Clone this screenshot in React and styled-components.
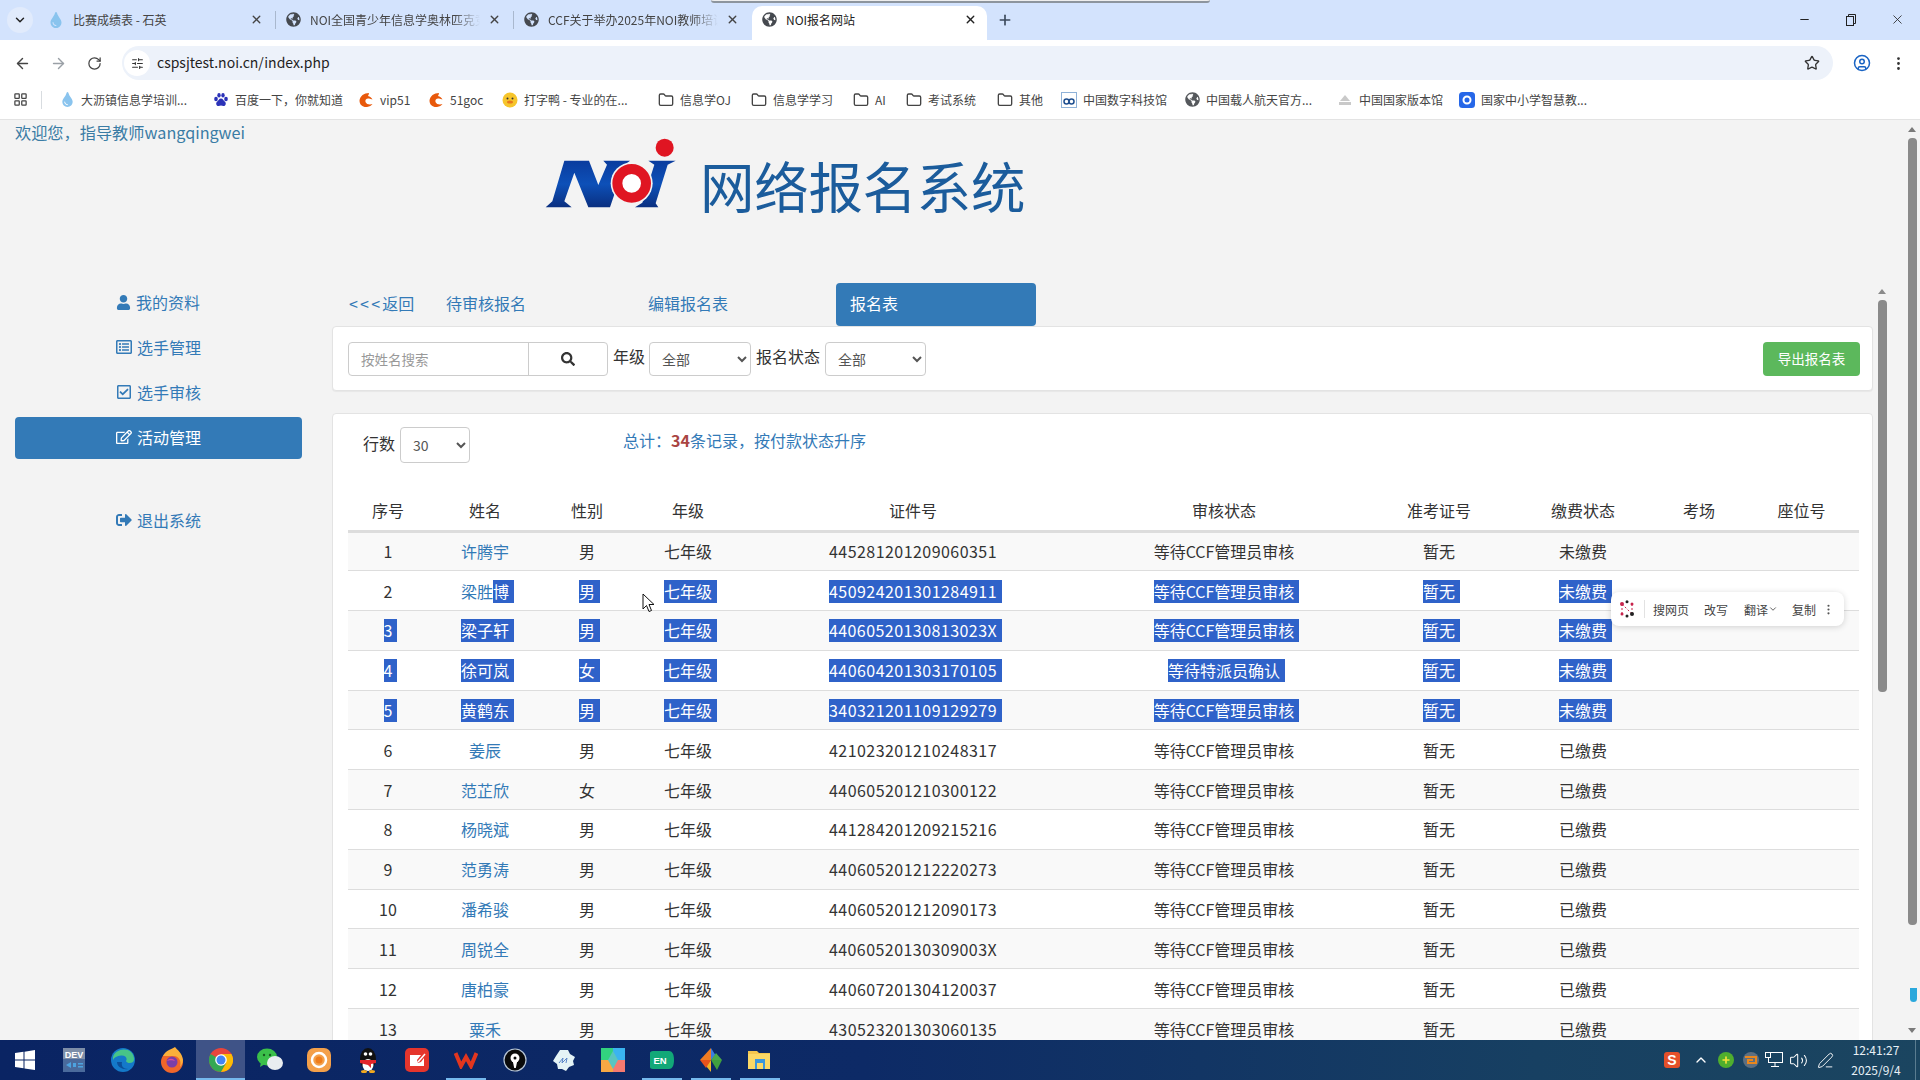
import React from 'react'
import styled, { createGlobalStyle } from 'styled-components'
import { ArrowLeft, ArrowRight, RotateCw, Star, CircleUser, EllipsisVertical, LayoutGrid, Folder, X, Plus, Minus, ChevronDown, SlidersHorizontal, ChevronUp, Volume2, PenLine } from 'lucide-react'
import { FaGlobeAmericas, FaUser, FaRegListAlt, FaRegCheckSquare, FaRegEdit, FaSignOutAlt, FaSearch, FaTint } from 'react-icons/fa'

const Global = createGlobalStyle`
  html, body { margin: 0; padding: 0; overflow: hidden; }
  body { font-family: "Noto Sans CJK SC", "Noto Sans", sans-serif; color: #333; }
  * { box-sizing: border-box; }
`

const students = [
  [1, '许腾宇', '男', '445281201209060351', '等待CCF管理员审核', '未缴费'],
  [2, '梁胜博', '男', '450924201301284911', '等待CCF管理员审核', '未缴费'],
  [3, '梁子轩', '男', '44060520130813023X', '等待CCF管理员审核', '未缴费'],
  [4, '徐可岚', '女', '440604201303170105', '等待特派员确认', '未缴费'],
  [5, '黄鹤东', '男', '340321201109129279', '等待CCF管理员审核', '未缴费'],
  [6, '姜辰', '男', '421023201210248317', '等待CCF管理员审核', '已缴费'],
  [7, '范芷欣', '女', '440605201210300122', '等待CCF管理员审核', '已缴费'],
  [8, '杨晓斌', '男', '441284201209215216', '等待CCF管理员审核', '已缴费'],
  [9, '范勇涛', '男', '440605201212220273', '等待CCF管理员审核', '已缴费'],
  [10, '潘希骏', '男', '440605201212090173', '等待CCF管理员审核', '已缴费'],
  [11, '周锐全', '男', '44060520130309003X', '等待CCF管理员审核', '已缴费'],
  [12, '唐柏豪', '男', '440607201304120037', '等待CCF管理员审核', '已缴费'],
  [13, '粟禾', '男', '430523201303060135', '等待CCF管理员审核', '已缴费'],
]

const columns = [
  ['序号', 80], ['姓名', 114], ['性别', 90], ['年级', 112], ['证件号', 338],
  ['审核状态', 284], ['准考证号', 146], ['缴费状态', 142], ['考场', 90], ['座位号', 115],
]

const bookmarks = [
  { w: 154, label: '大沥镇信息学培训...', icon: <FaTint size={15} color="#8ac4ee" /> },
  { w: 145, label: '百度一下，你就知道', icon: <BaiduIcon /> },
  { w: 70, label: 'vip51', icon: <SwirlIcon /> },
  { w: 74, label: '51goc', icon: <SwirlIcon /> },
  { w: 156, label: '打字鸭 - 专业的在...', icon: <DuckIcon /> },
  { w: 93, label: '信息学OJ', folder: true },
  { w: 102, label: '信息学学习', folder: true },
  { w: 53, label: 'AI', folder: true },
  { w: 91, label: '考试系统', folder: true },
  { w: 64, label: '其他', folder: true },
  { w: 123, label: '中国数字科技馆', icon: <DigitalIcon /> },
  { w: 153, label: '中国载人航天官方...', icon: <FaGlobeAmericas size={15} color="#55585c" /> },
  { w: 122, label: '中国国家版本馆', icon: <HallIcon /> },
  { w: 130, label: '国家中小学智慧教...', icon: <EduIcon /> },
]

function BaiduIcon() {
  return (
    <svg width="16" height="16" viewBox="0 0 16 16" fill="#2b32b8">
      <ellipse cx="3" cy="7" rx="1.8" ry="2.2" /><ellipse cx="6" cy="3.2" rx="1.7" ry="2.2" />
      <ellipse cx="10" cy="3.2" rx="1.7" ry="2.2" /><ellipse cx="13" cy="7" rx="1.8" ry="2.2" />
      <path d="M8 6.5c-2 0-2.4 2-4 3.2-1.5 1.2-.8 4.6 1.6 4.3 1-.1 1.6-.4 2.4-.4s1.4.3 2.4.4c2.4.3 3.1-3.1 1.6-4.3C10.400 8.500 10 6.500 8 6.500z" />
    </svg>
  )
}

function SwirlIcon() {
  return (
    <svg width="16" height="16" viewBox="0 0 16 16">
      <path d="M11 1 C6 1 2 4 1.500 8.500 C1.500 13 5 15.500 9 15 C11.500 14.700 13.500 13.500 14.500 12 C12 13 8.500 12.500 7.500 10 C6.800 8 8.500 6 11 6.500 L14.500 7.500 C13.500 5.500 12 4.500 10 4 C10.500 3 11 2 11 1z" fill="#e8590c" />
    </svg>
  )
}

function DuckIcon() {
  return (
    <svg width="16" height="16" viewBox="0 0 16 16">
      <circle cx="8" cy="8" r="7.500" fill="#f6c52c" />
      <circle cx="5.500" cy="6.500" r="1" fill="#333" /><circle cx="10.500" cy="6.500" r="1" fill="#333" />
      <ellipse cx="8" cy="10" rx="3" ry="1.600" fill="#e8781c" />
    </svg>
  )
}

function DigitalIcon() {
  return (
    <svg width="16" height="16" viewBox="0 0 16 16">
      <rect x=".5" y=".5" width="15" height="15" fill="#fff" stroke="#8fb2d8" />
      <circle cx="5.500" cy="9.500" r="2.500" fill="none" stroke="#1f4f8f" strokeWidth="1.500" />
      <circle cx="10.500" cy="9.500" r="2.500" fill="none" stroke="#1f4f8f" strokeWidth="1.500" />
    </svg>
  )
}

function HallIcon() {
  return (
    <svg width="16" height="16" viewBox="0 0 16 16" fill="#c9c9c9">
      <path d="M8 3 L13 9 H3z" /><rect x="2" y="10" width="12" height="3" />
    </svg>
  )
}

function EduIcon() {
  return (
    <svg width="16" height="16" viewBox="0 0 16 16">
      <rect width="16" height="16" rx="3.500" fill="#2667e8" />
      <circle cx="8" cy="8" r="3.500" fill="none" stroke="#fff" strokeWidth="2" />
    </svg>
  )
}

function RestoreIcon() {
  return (
    <svg width="12" height="14" viewBox="0 0 12 14" fill="none" stroke="#222" strokeWidth="1">
      <rect x="1.500" y="3.500" width="7" height="9" /><path d="M3.500 3.500V1.500H10.500V10.500H8.500" />
    </svg>
  )
}

function WindowsIcon() {
  return (
    <svg width="22" height="22" viewBox="0 0 22 22" fill="#fff">
      <path d="M1 4l8.500-1.200v7.700H1zM10.500 2.700L21 1v9.500H10.500zM1 11.500h8.500v7.700L1 18zM10.500 11.500H21V21l-10.500-1.600z" />
    </svg>
  )
}

function DevIcon() {
  return (
    <svg width="22" height="24" viewBox="0 0 22 24">
      <rect width="22" height="24" fill="#4a6a9c" />
      <rect width="22" height="11" fill="#7d8ea8" />
      <text x="11" y="9.500" fontSize="9" fontWeight="700" fill="#fff" textAnchor="middle" fontFamily="Liberation Sans">DEV</text>
      <path d="M3 17l5-3v6zM10 15h3v4h-3zM15 15h5v1.500h-5zM15 18h5v1.500h-5z" fill="#4da3e0" />
    </svg>
  )
}

function EdgeIcon() {
  return (
    <svg width="24" height="24" viewBox="0 0 24 24">
      <circle cx="12" cy="12" r="12" fill="#1479c9" />
      <path d="M2 9C4 2 14 -1 20 4c3 3 4 8 2 10-2 1.500-6 1.500-7-1 2-3-1-6-5-5.500C6 8 3 9.500 2 12z" fill="#47c488" />
      <path d="M6 14c0 5 6 8 11 7-5 0-7-3-6-7z" fill="#0b4f9a" />
    </svg>
  )
}

function FirefoxIcon() {
  return (
    <svg width="24" height="26" viewBox="0 0 24 26">
      <circle cx="12" cy="15" r="11" fill="#f0662a" />
      <path d="M3 9C6 3 12 2 15 0c2 3 7 5 8 13 0 3-2 6-3 7 2-7-2-11-6-11z" fill="#fbb03b" />
      <circle cx="12" cy="15" r="5.500" fill="#7a3ea8" />
      <path d="M7 14c2-3 6-3 8 0-2-1-6-1-8 0z" fill="#d94fa0" />
    </svg>
  )
}

function ChromeIcon() {
  return (
    <svg width="24" height="24" viewBox="0 0 24 24">
      <circle cx="12" cy="12" r="12" fill="#e8453c" />
      <path d="M12 12L1.600 6A12 12 0 0 0 12 24l6-10.400z" fill="#34a853" />
      <path d="M12 6h10.400A12 12 0 0 1 12 24l5.200-9z" fill="#fbbc05" />
      <circle cx="12" cy="12" r="5.800" fill="#fff" />
      <circle cx="12" cy="12" r="4.500" fill="#4285f4" />
    </svg>
  )
}

function WechatIcon() {
  return (
    <svg width="26" height="24" viewBox="0 0 26 24">
      <ellipse cx="10" cy="9" rx="10" ry="8.500" fill="#3bc04a" />
      <path d="M4 14l-1 5 5-3z" fill="#3bc04a" />
      <ellipse cx="18" cy="15" rx="8" ry="7" fill="#e9edf0" />
      <circle cx="7" cy="7" r="1.200" fill="#185c20" /><circle cx="13" cy="7" r="1.200" fill="#185c20" />
    </svg>
  )
}

function OrangeIcon() {
  return (
    <svg width="24" height="24" viewBox="0 0 24 24">
      <rect width="24" height="24" rx="7" fill="#f4a04a" />
      <circle cx="12" cy="12" r="7" fill="none" stroke="#fff" strokeWidth="2.500" />
      <circle cx="12" cy="12" r="3.500" fill="#ef7d1c" />
    </svg>
  )
}

function QQIcon() {
  return (
    <svg width="20" height="26" viewBox="0 0 20 26">
      <ellipse cx="10" cy="12" rx="8" ry="11" fill="#111" />
      <ellipse cx="10" cy="18" rx="5.500" ry="6" fill="#fff" />
      <circle cx="7.500" cy="7" r="1.800" fill="#fff" /><circle cx="12.500" cy="7" r="1.800" fill="#fff" />
      <path d="M2 13h16v3l-5 1v4l-3-3-8-2z" fill="#e4242a" />
      <ellipse cx="6" cy="24.500" rx="3" ry="1.500" fill="#f2a91e" /><ellipse cx="14" cy="24.500" rx="3" ry="1.500" fill="#f2a91e" />
    </svg>
  )
}

function NoteIcon() {
  return (
    <svg width="24" height="24" viewBox="0 0 24 24">
      <rect width="24" height="24" rx="5" fill="#e5352c" />
      <path d="M5 7h11l-4 5 1 3 3-1 3-4v8H5z" fill="#fff" />
      <path d="M13 14l7-8" stroke="#fff" strokeWidth="1.500" />
    </svg>
  )
}

function WpsIcon() {
  return (
    <svg width="24" height="18" viewBox="0 0 24 18" fill="none" stroke="#e2361f" strokeWidth="4">
      <path d="M1.500 2L7 15l5-9 5 9L22.500 2" />
    </svg>
  )
}

function InkIcon() {
  return (
    <svg width="24" height="24" viewBox="0 0 24 24">
      <circle cx="12" cy="12" r="11" fill="#0a0a0a" stroke="#b8c6d6" strokeWidth="1.200" />
      <circle cx="12" cy="10" r="4.500" fill="#fff" />
      <path d="M9.500 12h5L12.800 20h-1.600z" fill="#fff" />
      <circle cx="12" cy="10" r="1.500" fill="#0a0a0a" />
    </svg>
  )
}

function FlakeIcon() {
  return (
    <svg width="24" height="24" viewBox="0 0 24 24">
      <path d="M8 2h8l2 4 5 3-2 4 1 4-5 2-3 4-4-2-4 0-1-5-4-3 3-5z" fill="#e4f3f6" />
      <path d="M7 15l4-5-1 5 5-5-1 5" fill="none" stroke="#5b86c8" />
    </svg>
  )
}

function BlocksIcon() {
  return (
    <svg width="24" height="24" viewBox="0 0 24 24">
      <rect width="12" height="12" fill="#32d27f" /><rect x="12" width="12" height="12" fill="#3ab4f0" />
      <rect y="12" width="12" height="12" fill="#f7a844" /><rect x="12" y="12" width="12" height="12" fill="#f57a70" />
      <path d="M12 3l5 9-5 9-5-9z" fill="#59c5c0" />
    </svg>
  )
}

function EnIcon() {
  return (
    <svg width="24" height="20" viewBox="0 0 24 20">
      <path d="M3 1h16c3 0 5 3 5 9s-2 9-5 9H3c-2 0-3-1-3-2V3c0-1 1-2 3-2z" fill="#12a878" />
      <text x="10" y="14" fontSize="9.500" fontWeight="700" fill="#fff" textAnchor="middle" fontFamily="Liberation Sans">EN</text>
    </svg>
  )
}

function DiamondIcon() {
  return (
    <svg width="22" height="24" viewBox="0 0 22 24">
      <path d="M11 0l5 8-5 4z" fill="#3b7de0" /><path d="M11 12l11 0-6-7z" fill="#4aa84a" />
      <path d="M11 12l6 10 5-10z" fill="#3f9f3f" /><path d="M11 12v12l-5-6z" fill="#f0b429" />
      <path d="M11 12L0 12l6 8z" fill="#e8531c" /><path d="M11 12V0L0 12z" fill="#ef7b22" />
    </svg>
  )
}

function ExplorerIcon() {
  return (
    <svg width="24" height="22" viewBox="0 0 24 22">
      <path d="M0 2h9l2 2h11v16H0z" fill="#f4c64e" />
      <rect y="5" width="22" height="15" fill="#fbd866" />
      <rect x="7" y="10" width="10" height="10" fill="#3a96dd" />
      <rect x="9" y="14" width="6" height="6" fill="#fbd866" />
    </svg>
  )
}

const taskbarIcons = [
  { el: <WindowsIcon /> }, { el: <DevIcon /> }, { el: <EdgeIcon /> }, { el: <FirefoxIcon /> },
  { el: <ChromeIcon />, active: true, running: true }, { el: <WechatIcon /> }, { el: <OrangeIcon /> }, { el: <QQIcon /> },
  { el: <NoteIcon /> }, { el: <WpsIcon />, running: true }, { el: <InkIcon /> }, { el: <FlakeIcon /> },
  { el: <BlocksIcon /> }, { el: <EnIcon />, running: true }, { el: <DiamondIcon />, running: true }, { el: <ExplorerIcon />, running: true },
]

function Logo() {
  return (
    <LogoBox>
      <svg width="160" height="90" viewBox="0 0 480 270">
        <defs>
          <linearGradient id="noiBlue" x1="0" y1="0" x2="0" y2="1">
            <stop offset="0" stopColor="#0a3c9e" />
            <stop offset=".5" stopColor="#0d50b8" />
            <stop offset="1" stopColor="#0a2f80" />
          </linearGradient>
        </defs>
        <path d="M88 92H162L190 165L216 104L205 92H285L268 106L225 232H160L118 128L88 214L110 232H32L52 214z" fill="url(#noiBlue)" />
        <path d="M340 92H422L398 104L362 220L370 232H300L322 218L358 104z" fill="url(#noiBlue)" />
        <circle cx="290" cy="160" r="63" fill="#f3f3f3" />
        <circle cx="290" cy="160" r="43" fill="#fff" stroke="#e01522" strokeWidth="30" />
        <circle cx="389" cy="53" r="27" fill="#e01522" />
      </svg>
    </LogoBox>
  )
}

export default function App() {
  return (
    <Screen>
      <Global />
      <TabStrip>
        <WindowEdge />
        <TabMenu><ChevronDown size={14} strokeWidth={2.500} /></TabMenu>
        <BrowserTab $sep>
          <FaTint size={16} color="#8ac4ee" />
          <TabTitle>比赛成绩表 - 石英</TabTitle>
          <X size={13} strokeWidth={2.500} />
        </BrowserTab>
        <BrowserTab $sep>
          <FaGlobeAmericas size={15} color="#45494f" />
          <TabTitle $fade>NOI全国青少年信息学奥林匹克竞赛</TabTitle>
          <X size={13} strokeWidth={2.500} />
        </BrowserTab>
        <BrowserTab>
          <FaGlobeAmericas size={15} color="#45494f" />
          <TabTitle $fade>CCF关于举办2025年NOI教师培训</TabTitle>
          <X size={13} strokeWidth={2.500} />
        </BrowserTab>
        <BrowserTab $active>
          <FaGlobeAmericas size={15} color="#45494f" />
          <TabTitle>NOI报名网站</TabTitle>
          <X size={13} strokeWidth={2.500} />
        </BrowserTab>
        <NewTab><Plus size={16} strokeWidth={2.500} /></NewTab>
        <WindowButtons>
          <Minus size={13} /><RestoreIcon /><X size={15} strokeWidth={1.300} />
        </WindowButtons>
      </TabStrip>

      <Toolbar>
        <NavIcon><ArrowLeft size={17} /></NavIcon>
        <NavIcon $off><ArrowRight size={17} /></NavIcon>
        <NavIcon><RotateCw size={15} /></NavIcon>
        <Omnibox>
          <TuneBadge><SlidersHorizontal size={13} /></TuneBadge>
          <Url>cspsjtest.noi.cn/index.php</Url>
          <Star size={16} color="#333" />
        </Omnibox>
        <ProfileIcon $m={11}><CircleUser size={18} color="#1a64c4" /></ProfileIcon>
        <ProfileIcon><EllipsisVertical size={17} color="#333" /></ProfileIcon>
      </Toolbar>

      <BookmarkBar>
        <LayoutGrid size={15} color="#444" />
        <BarSep />
        {bookmarks.map(b => (
          <Bookmark key={b.label} $w={b.w}>
            {b.folder ? <Folder size={16} color="#444" /> : <BookmarkIcon>{b.icon}</BookmarkIcon>}
            <span>{b.label}</span>
          </Bookmark>
        ))}
      </BookmarkBar>

      <Page>
        <TopRow>
          <Welcome>欢迎您，指导教师wangqingwei</Welcome>
          <Logo />
          <SiteTitle>网络报名系统</SiteTitle>
        </TopRow>

        <Main>
          <Sidebar>
            <NavItem><FaUser size={15} />我的资料</NavItem>
            <NavItem><FaRegListAlt size={16} />选手管理</NavItem>
            <NavItem><FaRegCheckSquare size={16} />选手审核</NavItem>
            <NavItem $active><FaRegEdit size={16} />活动管理</NavItem>
            <NavItem $logout><FaSignOutAlt size={16} />退出系统</NavItem>
          </Sidebar>

          <Content>
            <Tabs>
              <TabLink $w={97}><BackArrows>&lt;&lt;&lt;</BackArrows>返回</TabLink>
              <TabLink $w={202}>待审核报名</TabLink>
              <TabLink $w={188}>编辑报名表</TabLink>
              <TabLink $w={200} $active>报名表</TabLink>
            </Tabs>

            <FilterPanel>
              <SearchGroup>
                <SearchInput placeholder="按姓名搜索" readOnly />
                <SearchButton><FaSearch size={14} /></SearchButton>
              </SearchGroup>
              <FilterLabel $gap={4}>年级</FilterLabel>
              <Select $w={102}><option>全部</option></Select>
              <FilterLabel $gap={5}>报名状态</FilterLabel>
              <Select $w={101}><option>全部</option></Select>
              <ExportButton>导出报名表</ExportButton>
            </FilterPanel>

            <TablePanel>
              <Controls>
                <RowsLabel>行数</RowsLabel>
                <Select $w={70} $h={36}><option>30</option></Select>
                <Summary>总计：<strong>34</strong>条记录，按付款状态升序</Summary>
              </Controls>
              <Table>
                <colgroup>
                  {columns.map(([name, w]) => <col key={name} width={w} />)}
                </colgroup>
                <thead>
                  <tr>{columns.map(([name]) => <Th key={name}>{name}</Th>)}</tr>
                </thead>
                <tbody>
                  {students.map(s => <StudentRow key={s[0]} s={s} />)}
                </tbody>
              </Table>
            </TablePanel>
          </Content>
        </Main>

        <Cursor>
          <svg width="13" height="20" viewBox="0 0 13 20">
            <path d="M1 1v15l3.500-3.500 2.500 6 2.500-1-2.500-6H12z" fill="#fff" stroke="#111" strokeWidth="1" />
          </svg>
        </Cursor>

        <SelectionBar>
          <svg width="18" height="18" viewBox="0 0 18 18">
            <path d="M4 4v10M4 4l10 10M14 4v10" stroke="#c8244c" strokeWidth="1" strokeDasharray="2 2" />
            <circle cx="4" cy="4" r="2" fill="#c8244c" /><circle cx="14" cy="14" r="2" fill="#222" />
            <circle cx="9" cy="1.800" r="1.500" fill="#222" /><circle cx="9" cy="16" r="1.500" fill="#222" />
            <circle cx="14" cy="4" r="1.500" fill="#c8244c" /><circle cx="4" cy="14" r="1.500" fill="#c8244c" />
          </svg>
          <BarDivider />
          <BarAction $w={51}>搜网页</BarAction>
          <BarAction $w={40}>改写</BarAction>
          <BarAction $w={48}>翻译<ChevronDown size={10} /></BarAction>
          <BarAction $w={30}>复制</BarAction>
          <EllipsisVertical size={13} color="#555" />
        </SelectionBar>

        <InnerArrow />
        <InnerThumb />
        <OuterArrowUp />
        <OuterThumb />
        <OuterMark />
        <OuterArrowDown />
      </Page>

      <Taskbar>
        {taskbarIcons.map((t, i) => (
          <TaskIcon key={i} $active={t.active} $running={t.running}>{t.el}</TaskIcon>
        ))}
        <Tray>
          <SogouBadge>S</SogouBadge>
          <ChevronUp size={16} />
          <TrayDot $bg="#4fae2e"><Plus size={10} strokeWidth={4} color="#f6e23a" /></TrayDot>
          <TrayDot $bg="#5d6f80"><OrangeMark /></TrayDot>
          <TrayNet><NetworkIcon /></TrayNet>
          <Volume2 size={19} strokeWidth={1.300} />
          <PenLine size={17} strokeWidth={1.300} />
          <Clock>
            <span>12:41:27</span>
            <span>2025/9/4</span>
          </Clock>
          <ShowDesktop />
        </Tray>
      </Taskbar>
    </Screen>
  )
}

function StudentRow({ s }) {
  const [no, name, sex, id, review, pay] = s
  const on = no >= 3 && no <= 5
  const partial = no === 2
  const sel = on || partial
  return (
    <Row>
      <Td>{on ? <Sel>{no}</Sel> : no}</Td>
      <Td $link={!sel}>
        {on && <Sel>{name}</Sel>}
        {partial && <><LinkText>{name.slice(0, 2)}</LinkText><Sel>{name.slice(2)}</Sel></>}
        {!sel && name}
      </Td>
      <Td>{sel ? <Sel>{sex}</Sel> : sex}</Td>
      <Td>{sel ? <Sel>七年级</Sel> : '七年级'}</Td>
      <Td $digits>{sel ? <Sel>{id}</Sel> : id}</Td>
      <Td>{sel ? <Sel>{review}</Sel> : review}</Td>
      <Td>{sel ? <Sel>暂无</Sel> : '暂无'}</Td>
      <Td>{sel ? <Sel>{pay}</Sel> : pay}</Td>
      <Td />
      <Td />
    </Row>
  )
}

function OrangeMark() {
  return <svg width="14" height="10" viewBox="0 0 14 10"><path d="M1 2h11v6H4V5h5" fill="none" stroke="#e8871e" strokeWidth="2" /></svg>
}

function NetworkIcon() {
  return (
    <svg width="18" height="18" viewBox="0 0 18 18" fill="none" stroke="#fff" strokeWidth="1">
      <rect x="3.500" y="1.500" width="14" height="10" /><path d="M10 11.500v4M6 15.500h8" />
      <rect x=".5" y="1.500" width="5" height="5" fill="#1b4560" />
    </svg>
  )
}

const Screen = styled.div`
  width: 1920px;
  height: 1080px;
  display: flex;
  flex-direction: column;
  overflow: hidden;
  background: #f3f3f3;
`

const TabStrip = styled.div`
  position: relative;
  height: 40px;
  flex: none;
  background: #d3e3fd;
  display: flex;
  align-items: flex-end;
  padding-left: 7px;
`

const WindowEdge = styled.div`
  position: absolute;
  left: 711px;
  top: 0;
  width: 499px;
  height: 3px;
  background: #eeeeee;
  border-bottom: 2px solid #8d959e;
  border-radius: 0 0 3px 3px;
`

const TabMenu = styled.div`
  width: 26px;
  height: 26px;
  margin: 0 5px 7px 0;
  border-radius: 50%;
  background: #e1ebfc;
  display: flex;
  align-items: center;
  justify-content: center;
  color: #222;
`

const BrowserTab = styled.div`
  position: relative;
  width: 238px;
  height: 34px;
  display: flex;
  align-items: center;
  padding: 0 13px 7px 10px;
  color: #444;
  svg { flex: none; }
  ${p => p.$sep && `
    &::after {
      content: '';
      position: absolute;
      right: 0;
      top: 5px;
      height: 18px;
      width: 1px;
      background: #a9b8ce;
    }
  `}
  ${p => p.$active && `
    background: #fff;
    border-radius: 10px 10px 0 0;
    width: 235px;
    padding-right: 10px;
    color: #222;
  `}
`

const TabTitle = styled.span`
  flex: 1;
  margin-left: 9px;
  margin-right: 8px;
  font-size: 12px;
  white-space: nowrap;
  overflow: hidden;
  ${p => p.$fade && `-webkit-mask-image: linear-gradient(to right, #000 85%, transparent);`}
`

const NewTab = styled.div`
  margin: 0 0 12px 10px;
  color: #3c4a5c;
  display: flex;
`

const WindowButtons = styled.div`
  position: absolute;
  right: 15px;
  top: 12px;
  width: 107px;
  display: flex;
  align-items: center;
  justify-content: space-between;
  color: #222;
`

const Toolbar = styled.div`
  height: 40px;
  flex: none;
  background: #fff;
  display: flex;
  align-items: center;
  padding: 6px 0 0 4px;
`

const NavIcon = styled.div`
  width: 36px;
  display: flex;
  justify-content: center;
  color: ${p => (p.$off ? '#9aa0a6' : '#444')};
`

const Omnibox = styled.div`
  width: 1711px;
  height: 34px;
  margin-left: 10px;
  border-radius: 17px;
  background: #edf2fa;
  display: flex;
  align-items: center;
  padding: 0 13px 0 2px;
`

const TuneBadge = styled.div`
  width: 26px;
  height: 26px;
  border-radius: 50%;
  background: #fff;
  display: flex;
  align-items: center;
  justify-content: center;
  color: #333;
`

const Url = styled.div`
  flex: 1;
  margin: -2px 0 0 7px;
  font-size: 14px;
  color: #1f1f1f;
`

const ProfileIcon = styled.div`
  width: 36px;
  margin-left: ${p => p.$m || 0}px;
  display: flex;
  justify-content: center;
`

const BookmarkBar = styled.div`
  height: 40px;
  flex: none;
  background: #fff;
  border-bottom: 1px solid #e3e3e3;
  display: flex;
  align-items: center;
  padding-left: 13px;
`

const BarSep = styled.div`
  width: 1px;
  height: 18px;
  margin: 0 17px 0 13px;
  background: #d8dce0;
`

const Bookmark = styled.div`
  width: ${p => p.$w}px;
  flex: none;
  display: flex;
  align-items: center;
  gap: 6px;
  font-size: 12px;
  color: #444;
  white-space: nowrap;
  svg { flex: none; }
`

const BookmarkIcon = styled.div`
  width: 16px;
  display: flex;
  justify-content: center;
`

const Page = styled.div`
  position: relative;
  flex: 1;
  min-height: 0;
  overflow: hidden;
  background: #f3f3f3;
`

const TopRow = styled.div`
  height: 162px;
  display: flex;
  align-items: flex-start;
`

const Welcome = styled.div`
  width: 535px;
  padding-left: 15px;
  font-size: 16.200px;
  line-height: 24px;
  color: #3a7ca5;
`

const LogoBox = styled.div`
  margin-top: 10px;
  width: 165px;
  flex: none;
`

const SiteTitle = styled.div`
  margin-top: 37px;
  font-size: 54.500px;
  line-height: 56px;
  color: #1b5c9c;
  letter-spacing: -0.3px;
`

const Main = styled.div`
  display: flex;
  align-items: flex-start;
  padding-left: 15px;
`

const Sidebar = styled.div`
  width: 287px;
  flex: none;
  display: flex;
  flex-direction: column;
  gap: 3px;
`

const NavItem = styled.div`
  height: 42px;
  display: flex;
  align-items: center;
  gap: 5px;
  padding: 0 0 2px 101px;
  font-size: 16px;
  border-radius: 4px;
  margin-top: ${p => (p.$logout ? 38 : 0)}px;
  color: ${p => (p.$active ? '#fff' : '#337ab7')};
  background: ${p => (p.$active ? '#337ab7' : 'transparent')};
`

const Content = styled.div`
  width: 1541px;
  margin-left: 30px;
  padding-top: 1px;
`

const Tabs = styled.div`
  height: 43px;
  display: flex;
  padding-left: 17px;
`

const TabLink = styled.div`
  width: ${p => p.$w}px;
  flex: none;
  display: flex;
  align-items: center;
  padding-bottom: 3px;
  font-size: 16px;
  color: ${p => (p.$active ? '#fff' : '#337ab7')};
  ${p => p.$active && `
    background: #337ab7;
    border-radius: 4px;
    padding-left: 14px;
  `}
`

const BackArrows = styled.span`
  letter-spacing: 2.200px;
`

const FilterPanel = styled.div`
  height: 65px;
  background: #fff;
  border: 1px solid #e3e3e3;
  border-radius: 4px;
  box-shadow: 0 1px 1px rgba(0, 0, 0, .05);
  display: flex;
  align-items: center;
  padding: 0 12px 0 15px;
`

const SearchGroup = styled.div`
  width: 260px;
  height: 34px;
  display: flex;
  border: 1px solid #ccc;
  border-radius: 4px;
  background: #fff;
`

const SearchInput = styled.input`
  width: 180px;
  border: 0;
  border-right: 1px solid #ccc;
  background: transparent;
  outline: 0;
  padding: 0 12px;
  font-family: inherit;
  font-size: 13.500px;
  &::placeholder { color: #999; }
`

const SearchButton = styled.div`
  flex: 1;
  display: flex;
  align-items: center;
  justify-content: center;
  color: #333;
`

const FilterLabel = styled.div`
  margin: -6px ${p => p.$gap || 5}px 0 5px;
  font-size: 16px;
  color: #333;
`

const Select = styled.select`
  width: ${p => p.$w}px;
  height: ${p => p.$h || 34}px;
  padding-left: 8px;
  border: 1px solid #ccc;
  border-radius: 4px;
  background: #fff;
  font-family: inherit;
  font-size: 14px;
  color: #555;
`

const ExportButton = styled.div`
  margin-left: auto;
  width: 97px;
  height: 34px;
  padding-bottom: 2px;
  border-radius: 4px;
  background: #5cb85c;
  color: #fff;
  font-size: 13.500px;
  display: flex;
  align-items: center;
  justify-content: center;
`

const TablePanel = styled.div`
  margin-top: 22px;
  height: 800px;
  background: #fff;
  border: 1px solid #e3e3e3;
  border-radius: 4px;
  padding: 13px 14px 0 15px;
`

const Controls = styled.div`
  height: 36px;
  display: flex;
  align-items: center;
  padding-left: 15px;
`

const RowsLabel = styled.div`
  margin: -5px 5px 0 0;
  font-size: 16px;
  color: #333;
`

const Summary = styled.div`
  align-self: flex-start;
  margin-left: 153px;
  font-size: 16px;
  line-height: 26px;
  color: #337ab7;
  strong { color: #a94442; font-weight: 700; }
`

const Table = styled.table`
  width: 1511px;
  margin-top: 32px;
  table-layout: fixed;
  border-collapse: collapse;
  font-size: 16px;
`

const Th = styled.th`
  height: 36px;
  padding: 0 0 4px;
  font-weight: 400;
  text-align: center;
  color: #333;
  border-bottom: 3px solid #ddd;
`

const Row = styled.tr`
  &:nth-child(odd) { background: #f9f9f9; }
  & + & td { border-top: 1px solid #ddd; }
`

const Td = styled.td`
  height: 39.800px;
  padding: 0;
  text-align: center;
  white-space: nowrap;
  color: ${p => (p.$link ? '#337ab7' : '#333')};
  letter-spacing: ${p => (p.$digits ? '0.45px' : '0')};
`

const LinkText = styled.span`
  color: #337ab7;
`

const Sel = styled.span`
  display: inline-block;
  height: 23px;
  line-height: 23px;
  padding-right: 5px;
  margin-right: -5px;
  background: #2f62c9;
  color: #fff;
`

const Cursor = styled.div`
  position: absolute;
  left: 642px;
  top: 473px;
  display: flex;
`

const SelectionBar = styled.div`
  position: absolute;
  left: 1611px;
  top: 472px;
  width: 233px;
  height: 34px;
  padding-left: 7px;
  display: flex;
  align-items: center;
  background: #fff;
  border-radius: 8px;
  box-shadow: 0 1px 6px rgba(0, 0, 0, .16);
`

const BarDivider = styled.div`
  width: 1px;
  height: 18px;
  margin: 0 8px;
  background: #e2e2e2;
`

const BarAction = styled.div`
  width: ${p => p.$w}px;
  flex: none;
  display: flex;
  align-items: center;
  font-size: 12px;
  color: #444;
`

const Arrow = styled.div`
  position: absolute;
  width: 0;
  height: 0;
  border-left: 4.500px solid transparent;
  border-right: 4.500px solid transparent;
`

const InnerArrow = styled(Arrow)`
  left: 1878px;
  top: 169px;
  border-bottom: 5px solid #8a8a8a;
`

const InnerThumb = styled.div`
  position: absolute;
  left: 1878px;
  top: 180px;
  width: 9px;
  height: 392px;
  border-radius: 4px;
  background: #8a8a8a;
`

const OuterArrowUp = styled(Arrow)`
  left: 1908px;
  top: 7px;
  border-bottom: 5px solid #7a7a7a;
`

const OuterThumb = styled.div`
  position: absolute;
  left: 1908px;
  top: 18px;
  width: 9px;
  height: 787px;
  border-radius: 4px;
  background: #8a8a8a;
`

const OuterMark = styled.div`
  position: absolute;
  left: 1910px;
  top: 868px;
  width: 7px;
  height: 14px;
  border-radius: 0 0 4px 4px;
  background: #2aa8dc;
`

const OuterArrowDown = styled(Arrow)`
  left: 1908px;
  top: 908px;
  border-top: 5px solid #7a7a7a;
`

const Taskbar = styled.div`
  position: relative;
  height: 40px;
  flex: none;
  display: flex;
  align-items: center;
  background: linear-gradient(90deg, #0a2463 0%, #0d2a66 45%, #174062 80%, #1b4560 100%);
`

const TaskIcon = styled.div`
  position: relative;
  width: 49px;
  height: 40px;
  flex: none;
  display: flex;
  align-items: center;
  justify-content: center;
  background: ${p => (p.$active ? '#3f5387' : 'transparent')};
  ${p => p.$running && `
    &::after {
      content: '';
      position: absolute;
      bottom: 0;
      left: ${p.$active ? '0' : '5px'};
      right: ${p.$active ? '0' : '4px'};
      height: 2px;
      background: #76b9ed;
    }
  `}
`

const Tray = styled.div`
  margin-left: auto;
  display: flex;
  align-items: center;
  gap: 9px;
  color: #fff;
  height: 100%;
`

const SogouBadge = styled.div`
  width: 16px;
  height: 16px;
  margin-right: 4px;
  background: #e4502a;
  border-radius: 3px;
  color: #fff;
  font: 700 14px/16px "Liberation Sans", sans-serif;
  text-align: center;
`

const TrayDot = styled.div`
  width: 16px;
  height: 16px;
  border-radius: 50%;
  background: ${p => p.$bg};
  display: flex;
  align-items: center;
  justify-content: center;
`

const TrayNet = styled.div`
  display: flex;
  margin: 0 -3px;
`

const Clock = styled.div`
  width: 60px;
  margin-left: 3px;
  display: flex;
  flex-direction: column;
  align-items: center;
  font-size: 12px;
  line-height: 20px;
  color: #e8f0f6;
`

const ShowDesktop = styled.div`
  width: 1px;
  height: 100%;
  margin: 0 4px 0 0;
  background: #5a7c90;
`
